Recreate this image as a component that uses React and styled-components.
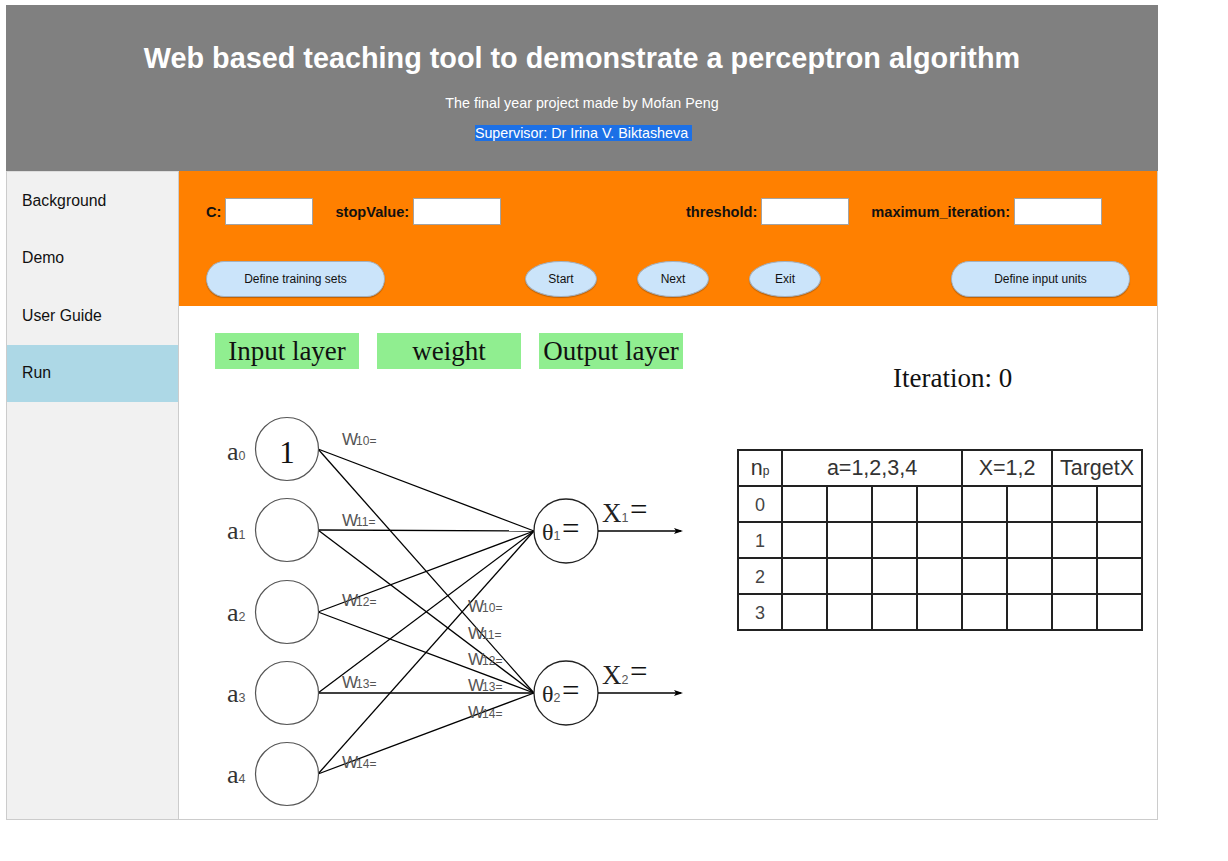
import React from "react";
import styled, { createGlobalStyle } from "styled-components";

const Global = createGlobalStyle`
  html, body { margin: 0; padding: 0; background: #fff; }
  body { font-family: "Liberation Sans", Arial, sans-serif; }
`;

const Page = styled.div`
  width: 1152px;
  margin: 5px 0 0 6px;
`;

const Header = styled.header`
  background: #808080;
  height: 166px;
  box-sizing: border-box;
  padding-top: 37px;
  text-align: center;
  color: #fff;
`;

const Title = styled.h1`
  margin: 0;
  font-size: 28.8px;
  line-height: 33px;
  font-weight: bold;
`;

const Sub = styled.p`
  margin: ${(p) => p.$top}px 0 0;
  font-size: 14.3px;
  line-height: 16px;
`;

const Highlight = styled.span`
  background: #1c70e6;
  padding: 0 4px 0 0;
  margin-left: 3px;
`;

const Body = styled.div`
  display: flex;
  height: 648px;
  border-bottom: 1px solid #ccc;
`;

const Sidebar = styled.nav`
  width: 171px;
  background: #f1f1f1;
  border-left: 1px solid #ccc;
  border-right: 1px solid #ccc;
  border-top: 1px solid #ddd;
  box-sizing: content-box;
  display: flex;
  flex-direction: column;
`;

const NavItem = styled.div`
  height: 57.5px;
  display: flex;
  align-items: center;
  padding-left: 15px;
  font-size: 15.8px;
  color: #111;
  background: ${(p) => (p.$active ? "#add8e6" : "transparent")};
`;

const Main = styled.main`
  flex: 1;
  border-right: 1px solid #ccc;
  display: flex;
  flex-direction: column;
`;

const Controls = styled.section`
  background: #ff8000;
  height: 135px;
  box-sizing: border-box;
  padding-top: 27px;
`;

const FieldRow = styled.div`
  display: flex;
  justify-content: space-between;
  padding: 0 55px 0 27px;
  height: 27px;
`;

const FieldGroup = styled.div`
  display: flex;
  gap: 22px;
`;

const Field = styled.label`
  display: flex;
  align-items: center;
  gap: 4px;
  font-size: 14.6px;
  font-weight: bold;
  color: #111;
`;

const Input = styled.input`
  width: 88px;
  height: 27px;
  box-sizing: border-box;
  border: 1px solid #a3a3a3;
  background: #fff;
  padding: 0 4px;
  margin: 0;
`;

const ButtonRow = styled.div`
  display: flex;
  align-items: center;
  padding: 0 27px;
  margin-top: 36px;
  gap: 40px;
`;

const Btn = styled.button`
  width: ${(p) => (p.$wide ? 179 : 72)}px;
  height: 36px;
  margin-left: ${(p) => p.$ml || 0};
  border-radius: ${(p) => (p.$wide ? "18px" : "50%")};
  border: 1px solid #a4b0bd;
  box-shadow: 0 1px 1px rgba(0, 0, 0, 0.25);
  background: #cbe4fa;
  font-family: "Liberation Sans", Arial, sans-serif;
  font-size: 12px;
  color: #111;
  padding: 0;
`;

const Content = styled.section`
  flex: 1;
  display: flex;
  padding: 27px 0 0 36px;
`;

const LeftCol = styled.div`
  width: 522px;
  display: flex;
  flex-direction: column;
`;

const LayerLabels = styled.div`
  display: flex;
  gap: 18px;
`;

const LayerLabel = styled.div`
  width: 144px;
  height: 36px;
  background: #90ee90;
  font-family: "Liberation Serif", "Times New Roman", serif;
  font-size: 27px;
  line-height: 36px;
  text-align: center;
  color: #111;
`;

const Network = styled.svg`
  margin-top: 31px;
  display: block;
`;

const RightCol = styled.div`
  width: 405px;
  display: flex;
  flex-direction: column;
`;

const Iteration = styled.div`
  margin: 30px 0 0 156px;
  font-family: "Liberation Serif", "Times New Roman", serif;
  font-size: 27px;
  line-height: 30px;
  color: #111;
`;

const Table = styled.table`
  margin-top: 56px;
  width: 405px;
  border-collapse: collapse;
  table-layout: fixed;
  font-family: "Liberation Sans", Arial, sans-serif;
`;

const Th = styled.th`
  border: 2px solid #222;
  height: 34px;
  padding: 0;
  font-weight: normal;
  font-size: 21.5px;
  color: #333;
  white-space: nowrap;
  overflow: hidden;
`;

const Td = styled.td`
  border: 2px solid #222;
  height: 32px;
  padding: 2px 0 0;
  text-align: center;
  font-size: 18px;
  color: #444;
`;

const Sm = styled.span`
  font-size: 12px;
`;

const inputs = [49, 130, 212, 293, 374];
const outs = [131, 293];
const leftW = [45, 126, 206, 288, 368];
const rightW = [212, 239, 265, 291, 318];
const wIdx = ["10", "11", "12", "13", "14"];

function NetworkDiagram() {
  const serif = "Liberation Serif, Times New Roman, serif";
  const sans = "Liberation Sans, Arial, sans-serif";
  return (
    <Network width="480" height="410" viewBox="0 0 480 410">
      {inputs.map((cy) =>
        outs.map((oy) => (
          <line key={cy + "-" + oy} x1="103" y1={cy} x2="319" y2={oy} stroke="#000" strokeWidth="1.3" />
        ))
      )}
      {inputs.map((cy, i) => (
        <g key={"in" + i}>
          <circle cx="72" cy={cy} r="31.5" fill="#fff" stroke="#555" strokeWidth="1.2" />
          <text x="12" y={cy + (i === 0 ? 11 : 9)} fontFamily={serif} fontSize="26" fill="#333">
            a
            <tspan fontFamily={sans} fontSize="12.5" fill="#555">{i}</tspan>
          </text>
        </g>
      ))}
      <text x="72" y="63" textAnchor="middle" fontFamily={serif} fontSize="31" fill="#111">1</text>
      {leftW.map((y, i) => (
        <text key={"lw" + i} x="127" y={y} fontFamily={sans} fontSize="17" fill="#555">
          W<tspan fontSize="12" dx="-2">{wIdx[i]}=</tspan>
        </text>
      ))}
      {rightW.map((y, i) => (
        <text key={"rw" + i} x="253" y={y} fontFamily={sans} fontSize="17" fill="#555">
          W<tspan fontSize="12" dx="-2">{wIdx[i]}=</tspan>
        </text>
      ))}
      {outs.map((oy, i) => (
        <g key={"out" + i}>
          <circle cx="351" cy={oy} r="32" fill="#fff" stroke="#222" strokeWidth="1.3" />
          <text x="327" y={oy + 9} fontFamily={serif} fontSize="24" fill="#222">
            θ<tspan fontFamily={sans} fontSize="12.5" fill="#555">{i + 1}</tspan>
          </text>
          <text x="347" y={oy + 8} fontFamily={serif} fontSize="31" fill="#111">=</text>
          <line x1="383" y1={oy} x2="466" y2={oy} stroke="#000" strokeWidth="1.3" />
          <path d={`M468 ${oy} L459 ${oy - 3} L461 ${oy} L459 ${oy + 3} Z`} fill="#000" />
          <text x="387" y={oy - 9} fontFamily={serif} fontSize="27" fill="#222">
            X<tspan fontFamily={sans} fontSize="12.5" fill="#555">{i + 1}</tspan>
          </text>
          <text x="415" y={oy - 11} fontFamily={serif} fontSize="31" fill="#111">=</text>
        </g>
      ))}
    </Network>
  );
}

export default function App() {
  const rows = [0, 1, 2, 3];
  return (
    <>
      <Global />
      <Page>
        <Header>
          <Title>Web based teaching tool to demonstrate a perceptron algorithm</Title>
          <Sub $top={20}>The final year project made by Mofan Peng</Sub>
          <Sub $top={14}>
            <Highlight>Supervisor: Dr Irina V. Biktasheva</Highlight>
          </Sub>
        </Header>
        <Body>
          <Sidebar>
            <NavItem>Background</NavItem>
            <NavItem>Demo</NavItem>
            <NavItem>User Guide</NavItem>
            <NavItem $active>Run</NavItem>
          </Sidebar>
          <Main>
            <Controls>
              <FieldRow>
                <FieldGroup>
                  <Field>C: <Input /></Field>
                  <Field>stopValue: <Input /></Field>
                </FieldGroup>
                <FieldGroup>
                  <Field>threshold: <Input /></Field>
                  <Field>maximum_iteration: <Input /></Field>
                </FieldGroup>
              </FieldRow>
              <ButtonRow>
                <Btn $wide>Define training sets</Btn>
                <Btn $ml="100px">Start</Btn>
                <Btn>Next</Btn>
                <Btn>Exit</Btn>
                <Btn $wide $ml="auto">Define input units</Btn>
              </ButtonRow>
            </Controls>
            <Content>
              <LeftCol>
                <LayerLabels>
                  <LayerLabel>Input layer</LayerLabel>
                  <LayerLabel>weight</LayerLabel>
                  <LayerLabel>Output layer</LayerLabel>
                </LayerLabels>
                <NetworkDiagram />
              </LeftCol>
              <RightCol>
                <Iteration>Iteration: 0</Iteration>
                <Table>
                  <colgroup>
                    <col style={{ width: 44 }} />
                    {Array.from({ length: 8 }).map((_, i) => (
                      <col key={i} style={{ width: 45 }} />
                    ))}
                  </colgroup>
                  <thead>
                    <tr>
                      <Th>n<Sm>p</Sm></Th>
                      <Th colSpan={4}>a=1,2,3,4</Th>
                      <Th colSpan={2}>X=1,2</Th>
                      <Th colSpan={2}>TargetX</Th>
                    </tr>
                  </thead>
                  <tbody>
                    {rows.map((r) => (
                      <tr key={r}>
                        <Td>{r}</Td>
                        {Array.from({ length: 8 }).map((_, i) => (
                          <Td key={i} />
                        ))}
                      </tr>
                    ))}
                  </tbody>
                </Table>
              </RightCol>
            </Content>
          </Main>
        </Body>
      </Page>
    </>
  );
}
